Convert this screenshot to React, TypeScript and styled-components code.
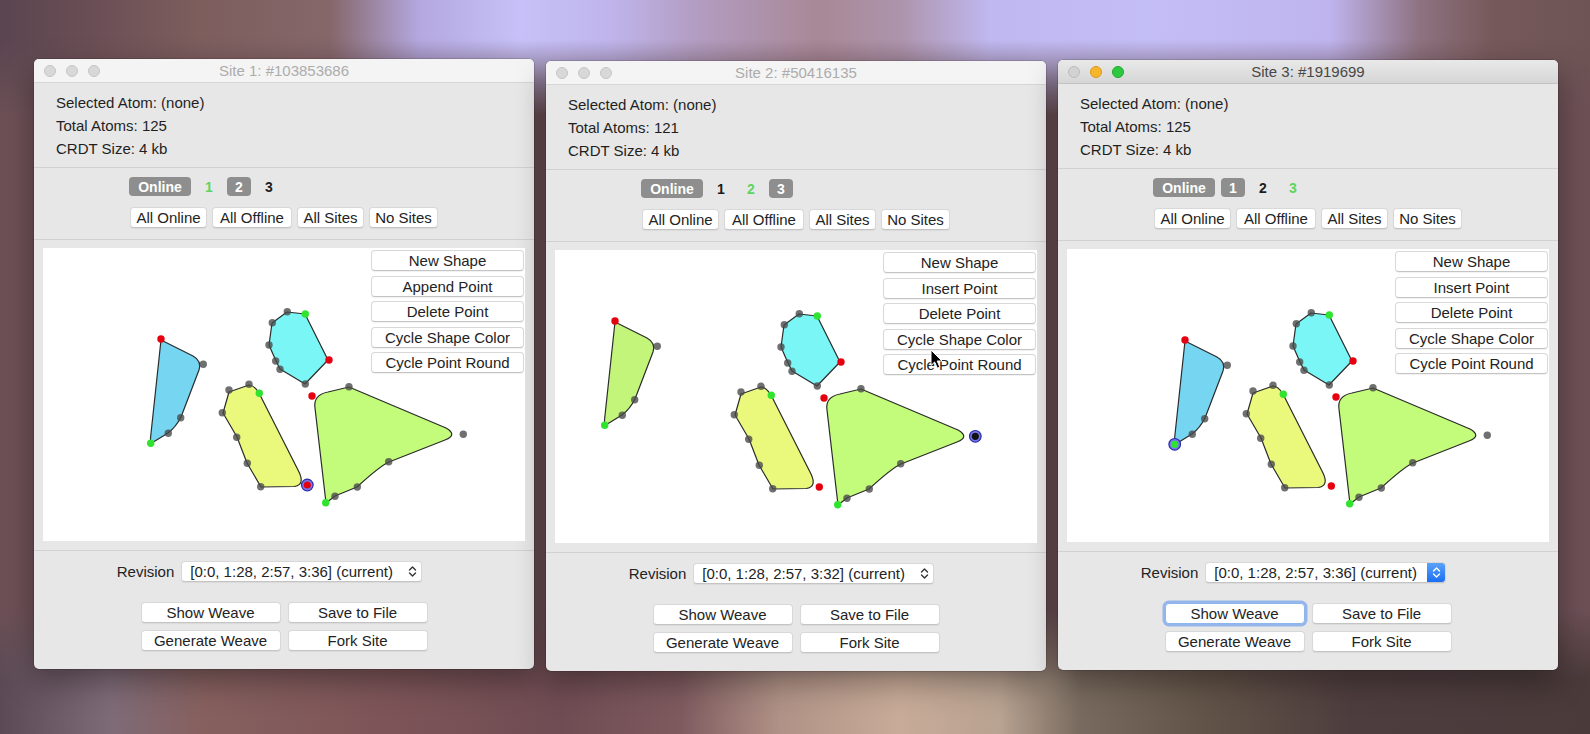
import styled, { createGlobalStyle, css } from "styled-components";

const GlobalStyle = createGlobalStyle`
  html, body {
    margin: 0;
    padding: 0;
    width: 1590px;
    height: 734px;
    overflow: hidden;
  }
  body {
    font-family: "Liberation Sans", Arial, sans-serif;
    color: #262626;
  }
`;

const Desktop = styled.div`
  display: flex;
  align-items: flex-start;
  gap: 12px;
  padding-left: 34px;
  width: 1590px;
  height: 734px;
  box-sizing: border-box;
  background:
    linear-gradient(180deg, rgba(108, 80, 86, 0) 40px, #6c5056 115px, #6c5056 610px, rgba(108, 80, 86, 0) 680px),
    linear-gradient(90deg, #5a4550 0, #6a4e55 90px, #7d5e5d 200px, #85676a 330px, #b4a8e0 420px, #c6c1f8 520px, #bfb5ec 610px, #b29cc0 700px, #a88896 820px, #ad94ac 900px, #c0b8f0 990px, #c4bef6 1150px, #bfb4ee 1330px, #8e7280 1420px, #765a5b 1490px, #6e5454 1590px) top / 100% 367px no-repeat,
    linear-gradient(90deg, #5b4a55 0, #7e6b78 110px, #86605f 200px, #7d5558 380px, #6f4c53 560px, #7e5a5f 680px, #b09286 780px, #c8ab98 900px, #b8a291 1000px, #786a5e 1080px, #625448 1200px, #4e3d3e 1350px, #4a3a3a 1590px) bottom / 100% 367px no-repeat,
    #6c5056;
`;

const Window = styled.div<{ $top: number }>`
  flex: none;
  width: 500px;
  height: 610px;
  margin-top: ${(p) => p.$top}px;
  display: flex;
  flex-direction: column;
  background: #e7e7e7;
  border-radius: 5px;
  overflow: hidden;
  box-shadow: 0 0 0 0.5px rgba(0, 0, 0, 0.25), 0 12px 30px rgba(0, 0, 0, 0.35);
`;

const TitleBar = styled.div<{ $active: boolean }>`
  height: 23px;
  flex: none;
  display: grid;
  grid-template-columns: 1fr auto 1fr;
  align-items: center;
  border-bottom: 1px solid ${(p) => (p.$active ? "#c2c2c2" : "#d6d6d6")};
  background: ${(p) =>
    p.$active ? "linear-gradient(#e9e9e9, #d6d6d6)" : "#f4f4f4"};
`;

const Lights = styled.div`
  display: flex;
  gap: 10px;
  padding-left: 10px;
`;

const Light = styled.span<{ $color: string; $edge: string }>`
  width: 12px;
  height: 12px;
  border-radius: 50%;
  box-sizing: border-box;
  background: ${(p) => p.$color};
  border: 0.5px solid ${(p) => p.$edge};
`;

const Title = styled.div<{ $active: boolean }>`
  font-size: 15px;
  color: ${(p) => (p.$active ? "#474747" : "#acacac")};
`;

const Info = styled.div`
  padding: 8px 22px 7px;
  font-size: 15px;
  line-height: 23px;
  color: #1f1f1f;
`;

const Divider = styled.div`
  height: 1px;
  flex: none;
  background: #d1d1d1;
`;

const Controls = styled.div`
  display: flex;
  justify-content: center;
  padding: 9px 0 11px;
`;

const ControlBlock = styled.div`
  display: flex;
  flex-direction: column;
  align-items: flex-start;
  gap: 11px;
`;

const OnlineRow = styled.div`
  display: flex;
  align-items: center;
  gap: 6px;
  margin-left: -1px;
`;

const Badge = styled.span<{ $w: number }>`
  width: ${(p) => p.$w}px;
  height: 19px;
  border-radius: 4px;
  background: #8e8e8e;
  color: #fff;
  font-weight: bold;
  font-size: 14px;
  display: flex;
  align-items: center;
  justify-content: center;
`;

const Digit = styled.span<{ $green: boolean }>`
  width: 24px;
  text-align: center;
  font-weight: bold;
  font-size: 14px;
  color: ${(p) => (p.$green ? "#5fd55f" : "#1c1c1c")};
`;

const ButtonRow = styled.div`
  display: flex;
  gap: 5px;
`;

const PushButton = styled.div<{ $w: number; $focus?: boolean }>`
  width: ${(p) => p.$w}px;
  height: 21px;
  box-sizing: border-box;
  display: flex;
  align-items: center;
  justify-content: center;
  background: #fff;
  border: 1px solid #d8d8d8;
  border-bottom-color: #c4c4c4;
  border-radius: 4px;
  box-shadow: 0 1px 1px rgba(0, 0, 0, 0.06);
  font-size: 15px;
  color: #232323;
  white-space: nowrap;
  ${(p) =>
    p.$focus &&
    css`
      border-color: #8fb6ec;
      box-shadow: 0 0 0 2.5px rgba(120, 165, 235, 0.75);
    `}
`;

const Canvas = styled.div`
  position: relative;
  margin: 8px 9px 9px;
  height: 293px;
  background: #fff;
  flex: none;
  svg.board {
    display: block;
  }
`;

const ToolColumn = styled.div`
  position: absolute;
  top: 2px;
  right: 1px;
  display: flex;
  flex-direction: column;
  gap: 4.5px;
`;

const Cursor = styled.svg<{ $x: number; $y: number }>`
  position: absolute;
  left: ${(p) => p.$x}px;
  top: ${(p) => p.$y}px;
  z-index: 2;
`;

const RevisionRow = styled.div`
  display: flex;
  justify-content: center;
  align-items: center;
  gap: 7px;
  padding: 10px 29px 0 0;
  font-size: 15px;
  color: #232323;
`;

const Popup = styled.div`
  width: 241px;
  height: 21px;
  box-sizing: border-box;
  display: flex;
  align-items: center;
  background: #fff;
  border: 1px solid #d8d8d8;
  border-bottom-color: #c4c4c4;
  border-radius: 4px;
  box-shadow: 0 1px 1px rgba(0, 0, 0, 0.06);
  overflow: hidden;
  span {
    flex: 1;
    padding-left: 8px;
    white-space: nowrap;
  }
`;

const Stepper = styled.div<{ $active: boolean }>`
  width: 18px;
  height: 100%;
  display: flex;
  align-items: center;
  justify-content: center;
  ${(p) =>
    p.$active &&
    css`
      background: linear-gradient(#5aa2fa, #1b6ff2);
    `}
`;

const ActionGrid = styled.div`
  display: grid;
  grid-template-columns: 140px 140px;
  justify-content: center;
  gap: 7px;
  margin-top: 20px;
`;

type DotKind = "r" | "g" | "k";
type Dot = [DotKind, number, number];

const DOT_FILL: Record<DotKind, string> = {
  r: "#e6000f",
  g: "#2fe32f",
  k: "rgba(72,72,72,0.78)",
};

const SHAPES: { id: string; d: string; fill: string; dots: Dot[] }[] = [
  {
    id: "a",
    d: "M118 92 L150 108 Q159 113 156 122 L138 169 Q133 179 125 185 L112 193 Q107 196 107.5 190 Z",
    fill: "#76d6f2",
    dots: [
      ["r", 118, 91],
      ["k", 160.3, 116.3],
      ["k", 137.7, 169.7],
      ["k", 125.3, 185.3],
      ["g", 107.7, 195.3],
    ],
  },
  {
    id: "b",
    d: "M229 75 L244 64 L262 66 L285 112 L262 136 L237 121 L233 113 L226 97 Z",
    fill: "#7af6f6",
    dots: [
      ["k", 244.3, 63.7],
      ["g", 262.3, 66],
      ["r", 286, 112],
      ["k", 262.3, 136],
      ["k", 237, 121.3],
      ["k", 232.7, 113],
      ["k", 226, 97],
      ["k", 229.3, 74.7],
    ],
  },
  {
    id: "c",
    d: "M180 165 L186 144 L206 137 Q211 137 216 145 L255 222 Q263 237 251 238.5 L218 239 L204 215 L194 189 Z",
    fill: "#eaf97c",
    dots: [
      ["k", 186, 142],
      ["k", 206, 136.3],
      ["g", 216.3, 145.3],
      ["r", 264.3, 237],
      ["k", 217.7, 238.7],
      ["k", 204.3, 215.3],
      ["k", 193.7, 189.3],
      ["k", 179.3, 164.7],
    ],
  },
  {
    id: "d",
    d: "M283 255 L272 160 Q270 147 285 144 L306 139 L403 180 Q415 187 402 192 L346 214 Q337 218 314 239 L292 248 Z",
    fill: "#c3fb7b",
    dots: [
      ["r", 269, 148],
      ["k", 306, 138.7],
      ["k", 420.3, 186.3],
      ["k", 345.7, 213.7],
      ["k", 314.3, 239],
      ["k", 292, 248.3],
      ["g", 282.7, 254.7],
    ],
  },
];

type Site = { label: string; kind: "badge" | "green" | "plain" };

interface SiteWindow {
  title: string;
  top: number;
  active: boolean;
  atoms: number;
  revision: string;
  sites: Site[];
  second: string;
  shiftA: boolean;
  selection: { x: number; y: number; center: string };
  cursor: boolean;
}

const WINDOWS: SiteWindow[] = [
  {
    title: "Site 1: #103853686",
    top: 59,
    active: false,
    atoms: 125,
    revision: "[0:0, 1:28, 2:57, 3:36] (current)",
    sites: [
      { label: "1", kind: "green" },
      { label: "2", kind: "badge" },
      { label: "3", kind: "plain" },
    ],
    second: "Append Point",
    shiftA: false,
    selection: { x: 264.3, y: 237, center: DOT_FILL.r },
    cursor: false,
  },
  {
    title: "Site 2: #50416135",
    top: 61,
    active: false,
    atoms: 121,
    revision: "[0:0, 1:28, 2:57, 3:32] (current)",
    sites: [
      { label: "1", kind: "plain" },
      { label: "2", kind: "green" },
      { label: "3", kind: "badge" },
    ],
    second: "Insert Point",
    shiftA: true,
    selection: { x: 420.3, y: 186.3, center: "#111" },
    cursor: true,
  },
  {
    title: "Site 3: #1919699",
    top: 60,
    active: true,
    atoms: 125,
    revision: "[0:0, 1:28, 2:57, 3:36] (current)",
    sites: [
      { label: "1", kind: "badge" },
      { label: "2", kind: "plain" },
      { label: "3", kind: "green" },
    ],
    second: "Insert Point",
    shiftA: false,
    selection: { x: 107.7, y: 195.3, center: DOT_FILL.g },
    cursor: false,
  },
];

function Chevrons({ color }: { color: string }) {
  return (
    <svg width="9" height="13" viewBox="0 0 9 13">
      <path
        d="M1.5 5 L4.5 2 L7.5 5 M1.5 8 L4.5 11 L7.5 8"
        fill="none"
        stroke={color}
        strokeWidth="1.4"
        strokeLinecap="round"
        strokeLinejoin="round"
      />
    </svg>
  );
}

function Board({ win }: { win: SiteWindow }) {
  return (
    <svg className="board" width="482" height="293" viewBox="0 0 482 293">
      {SHAPES.map((s) => {
        const shifted = s.id === "a" && win.shiftA;
        return (
          <g key={s.id} transform={shifted ? "translate(-58 -20)" : undefined}>
            <path
              d={s.d}
              fill={shifted ? "#c3f57b" : s.fill}
              stroke="#2b2b2b"
              strokeWidth="1.2"
              strokeLinejoin="round"
            />
            {s.dots.map(([k, x, y], i) => (
              <circle key={i} cx={x} cy={y} r="3.7" fill={DOT_FILL[k]} />
            ))}
          </g>
        );
      })}
      <circle
        cx={win.selection.x}
        cy={win.selection.y}
        r="5.8"
        fill="#7878ee"
        stroke="#2a2aa8"
        strokeWidth="1.2"
      />
      <circle cx={win.selection.x} cy={win.selection.y} r="3.6" fill={win.selection.center} />
    </svg>
  );
}

function SiteWindowView({ win }: { win: SiteWindow }) {
  const lights = win.active
    ? [
        { c: "#d2d2d2", e: "#bdbdbd" },
        { c: "#f7b52b", e: "#dc9b17" },
        { c: "#2dc840", e: "#1fa82f" },
      ]
    : [
        { c: "#d8d8d8", e: "#c6c6c6" },
        { c: "#d8d8d8", e: "#c6c6c6" },
        { c: "#d8d8d8", e: "#c6c6c6" },
      ];
  return (
    <Window $top={win.top}>
      <TitleBar $active={win.active}>
        <Lights>
          {lights.map((l, i) => (
            <Light key={i} $color={l.c} $edge={l.e} />
          ))}
        </Lights>
        <Title $active={win.active}>{win.title}</Title>
        <div />
      </TitleBar>
      <Info>
        <div>Selected Atom: (none)</div>
        <div>Total Atoms: {win.atoms}</div>
        <div>CRDT Size: 4 kb</div>
      </Info>
      <Divider />
      <Controls>
        <ControlBlock>
          <OnlineRow>
            <Badge $w={62}>Online</Badge>
            {win.sites.map((s) =>
              s.kind === "badge" ? (
                <Badge key={s.label} $w={24}>
                  {s.label}
                </Badge>
              ) : (
                <Digit key={s.label} $green={s.kind === "green"}>
                  {s.label}
                </Digit>
              )
            )}
          </OnlineRow>
          <ButtonRow>
            <PushButton $w={77}>All Online</PushButton>
            <PushButton $w={80}>All Offline</PushButton>
            <PushButton $w={67}>All Sites</PushButton>
            <PushButton $w={69}>No Sites</PushButton>
          </ButtonRow>
        </ControlBlock>
      </Controls>
      <Divider />
      <Canvas>
        <Board win={win} />
        <ToolColumn>
          {["New Shape", win.second, "Delete Point", "Cycle Shape Color", "Cycle Point Round"].map(
            (t) => (
              <PushButton key={t} $w={153}>
                {t}
              </PushButton>
            )
          )}
        </ToolColumn>
        {win.cursor && (
          <Cursor $x={375} $y={99} width="14" height="21" viewBox="0 0 14 21">
            <path
              d="M1 1 L1 16.5 L4.6 13 L7.4 19.2 L9.9 18.1 L7.2 12 L12 12 Z"
              fill="#000"
              stroke="#fff"
              strokeWidth="1"
              strokeLinejoin="round"
            />
          </Cursor>
        )}
      </Canvas>
      <Divider />
      <RevisionRow>
        <span>Revision</span>
        <Popup>
          <span>{win.revision}</span>
          <Stepper $active={win.active}>
            <Chevrons color={win.active ? "#fff" : "#333"} />
          </Stepper>
        </Popup>
      </RevisionRow>
      <ActionGrid>
        <PushButton $w={140} $focus={win.active}>
          Show Weave
        </PushButton>
        <PushButton $w={140}>Save to File</PushButton>
        <PushButton $w={140}>Generate Weave</PushButton>
        <PushButton $w={140}>Fork Site</PushButton>
      </ActionGrid>
    </Window>
  );
}

export default function App() {
  return (
    <>
      <GlobalStyle />
      <Desktop>
        {WINDOWS.map((w) => (
          <SiteWindowView key={w.title} win={w} />
        ))}
      </Desktop>
    </>
  );
}
